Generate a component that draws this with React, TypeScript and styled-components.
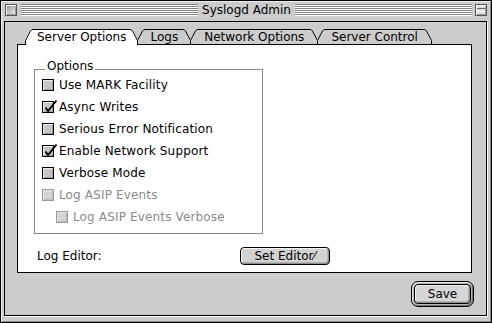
import React from "react"
import styled, { createGlobalStyle } from "styled-components"

const GlobalStyle = createGlobalStyle`
  html, body {
    margin: 0;
    padding: 0;
    background: #cccccc;
  }
  body {
    font-family: "DejaVu Sans", "Liberation Sans", sans-serif;
    font-size: 12px;
    color: #000;
  }
`

const Window = styled.div`
  box-sizing: border-box;
  width: 492px;
  height: 323px;
  display: flex;
  flex-direction: column;
  background: #cccccc;
  border: 1px solid #000;
  box-shadow: inset 1px 1px #eeeeee, inset -1px -1px #888888;
`

const TitleBar = styled.div`
  box-sizing: border-box;
  height: 20px;
  flex: none;
  display: flex;
  align-items: flex-start;
  padding: 3px 4px 0 4px;
`

const CloseBox = styled.div`
  box-sizing: border-box;
  width: 12px;
  height: 12px;
  flex: none;
  border: 1px solid #555;
  background: linear-gradient(135deg, #8a8a8a 0%, #f4f4f4 100%);
  box-shadow: inset 1px 1px #fff, inset -1px -1px #999;
`

const ZoomBox = styled.div`
  box-sizing: border-box;
  position: relative;
  width: 12px;
  height: 12px;
  flex: none;
  margin-left: 3px;
  border: 1px solid #555;
  background: #dddddd;
  box-shadow: inset 1px 1px #fff, inset -1px -1px #999;
  &::after {
    content: "";
    position: absolute;
    left: 1px;
    right: 1px;
    top: 3px;
    height: 2px;
    border-top: 1px solid #666;
    border-bottom: 1px solid #fff;
  }
`

const Stripes = styled.div<{ $first?: boolean }>`
  flex: 1;
  height: 12px;
  margin-left: ${p => (p.$first ? 4 : 0)}px;
  background: repeating-linear-gradient(
    to bottom,
    #808080 0px,
    #808080 1px,
    #ffffff 1px,
    #ffffff 2px
  );
`

const Title = styled.div`
  flex: none;
  padding: 0 4px 0 4px;
  line-height: 13px;
  white-space: nowrap;
`

const Body = styled.div`
  box-sizing: border-box;
  flex: 1;
  display: flex;
  flex-direction: column;
  margin: 0 4px 6px 3px;
  padding: 7px 12px 8px 12px;
  border: 1px solid #000;
  box-shadow: 1px 1px 0 #ffffff;
`

const TabStrip = styled.div`
  position: relative;
  z-index: 2;
  height: 15px;
  display: flex;
  align-items: flex-start;
  padding-left: 8px;
`

const TabItem = styled.div<{ $active: boolean }>`
  display: flex;
  height: ${p => (p.$active ? 16 : 15)}px;
  & + & {
    margin-left: -1px;
  }
`

const TabLabel = styled.div<{ $active: boolean; $pad: number }>`
  box-sizing: border-box;
  height: 100%;
  padding: 0 ${p => p.$pad}px;
  border-top: 1px solid #000;
  background: ${p => (p.$active ? "#ffffff" : "#cccccc")};
  line-height: 14px;
  white-space: nowrap;
`

const Panel = styled.div`
  box-sizing: border-box;
  height: 229px;
  flex: none;
  margin-right: 2px;
  padding: 24px 0 0 16px;
  border: 1px solid #000;
  background: #ffffff;
`

const Group = styled.div`
  box-sizing: border-box;
  position: relative;
  width: 229px;
  height: 165px;
  padding: 4px 0 0 7px;
  border: 1px solid #8a8a8a;
`

const GroupTitle = styled.div`
  position: absolute;
  top: -11px;
  left: 10px;
  padding: 0 2px;
  background: #ffffff;
  line-height: 14px;
`

const Row = styled.div<{ $indent?: boolean; $disabled?: boolean }>`
  height: 22px;
  display: flex;
  align-items: center;
  gap: 5px;
  margin-left: ${p => (p.$indent ? 14 : 0)}px;
  color: ${p => (p.$disabled ? "#8a8a8a" : "#000")};
  letter-spacing: 0.15px;
  white-space: nowrap;
`

const Box = styled.span<{ $disabled?: boolean }>`
  box-sizing: border-box;
  position: relative;
  width: 12px;
  height: 12px;
  flex: none;
  border: 1px solid ${p => (p.$disabled ? "#999" : "#000")};
  background: ${p => (p.$disabled ? "#d4d4d4" : "#c6c6c6")};
  box-shadow: ${p =>
    p.$disabled
      ? "inset 1px 1px #e6e6e6, inset -1px -1px #bbbbbb"
      : "inset 1px 1px #eeeeee, inset -1px -1px #999999"};
`

const Check = styled.svg`
  position: absolute;
  left: 0;
  top: -4px;
  overflow: visible;
`

const EditorRow = styled.div`
  display: flex;
  align-items: center;
  height: 18px;
  margin-top: 13px;
  padding-left: 3px;
`

const EditorLabel = styled.div`
  width: 203px;
  flex: none;
`

const Button = styled.div`
  box-sizing: border-box;
  display: flex;
  align-items: center;
  justify-content: center;
  width: 90px;
  height: 18px;
  border: 1px solid #000;
  border-radius: 4px;
  background: #d2d2d2;
  box-shadow: inset 1px 1px #f4f4f4, inset -1px -1px #8e8e8e,
    inset -2px -2px #b4b4b4;
  line-height: 14px;
  white-space: nowrap;
`

const Footer = styled.div`
  display: flex;
  justify-content: flex-end;
  margin-top: 8px;
`

const DefaultRing = styled.div`
  box-sizing: border-box;
  width: 63px;
  height: 26px;
  padding: 2px;
  border: 1px solid #000;
  border-radius: 7px;
  background: #b8b8b8;
  box-shadow: inset 1px 1px #e8e8e8, inset -1px -1px #777777;
`

const SaveButton = styled(Button)`
  width: 100%;
  height: 100%;
  background: #d6d6d6;
`

const TabEdge = ({ side, h, fill }: { side: "left" | "right"; h: number; fill: string }) => {
  const fillPath =
    side === "left"
      ? `M0,${h} L0,11 L5,2 Q6,0 8,0 L8,${h} Z`
      : `M8,${h} L8,11 L3,2 Q2,0 0,0 L0,${h} Z`
  const line =
    side === "left"
      ? `M0.5,${h} L0.5,11.5 L5.5,2 Q6.5,0.5 8,0.5`
      : `M7.5,${h} L7.5,11.5 L2.5,2 Q1.5,0.5 0,0.5`
  return (
    <svg width={8} height={h} viewBox={`0 0 8 ${h}`} style={{ display: "block", flex: "none" }}>
      <path d={fillPath} fill={fill} />
      <path d={line} fill="none" stroke="#000" strokeWidth={1} />
    </svg>
  )
}

const Tab = ({ label, pad, active = false }: { label: string; pad: number; active?: boolean }) => {
  const h = active ? 16 : 15
  const fill = active ? "#ffffff" : "#cccccc"
  return (
    <TabItem $active={active}>
      <TabEdge side="left" h={h} fill={fill} />
      <TabLabel $active={active} $pad={pad}>
        {label}
      </TabLabel>
      <TabEdge side="right" h={h} fill={fill} />
    </TabItem>
  )
}

const Checkbox = ({
  label,
  checked = false,
  disabled = false,
  indent = false,
}: {
  label: string
  checked?: boolean
  disabled?: boolean
  indent?: boolean
}) => (
  <Row $indent={indent} $disabled={disabled}>
    <Box $disabled={disabled}>
      {checked && (
        <Check width={15} height={15} viewBox="0 0 15 15">
          <polyline
            points="2.5,9.5 5,13 13.5,2.5"
            fill="none"
            stroke="#000"
            strokeWidth={1.8}
          />
        </Check>
      )}
    </Box>
    {label}
  </Row>
)

const options = [
  { label: "Use MARK Facility" },
  { label: "Async Writes", checked: true },
  { label: "Serious Error Notification" },
  { label: "Enable Network Support", checked: true },
  { label: "Verbose Mode" },
  { label: "Log ASIP Events", disabled: true },
  { label: "Log ASIP Events Verbose", disabled: true, indent: true },
]

const App = () => (
  <>
    <GlobalStyle />
    <Window>
      <TitleBar>
        <CloseBox />
        <Stripes $first />
        <Title>Syslogd Admin</Title>
        <Stripes />
        <ZoomBox />
      </TitleBar>
      <Body>
        <TabStrip>
          <Tab label="Server Options" pad={4} active />
          <Tab label="Logs" pad={5} />
          <Tab label="Network Options" pad={6} />
          <Tab label="Server Control" pad={6} />
        </TabStrip>
        <Panel>
          <Group>
            <GroupTitle>Options</GroupTitle>
            {options.map(o => (
              <Checkbox key={o.label} {...o} />
            ))}
          </Group>
          <EditorRow>
            <EditorLabel>Log Editor:</EditorLabel>
            <Button>Set Editor⁄</Button>
          </EditorRow>
        </Panel>
        <Footer>
          <DefaultRing>
            <SaveButton>Save</SaveButton>
          </DefaultRing>
        </Footer>
      </Body>
    </Window>
  </>
)

export default App
